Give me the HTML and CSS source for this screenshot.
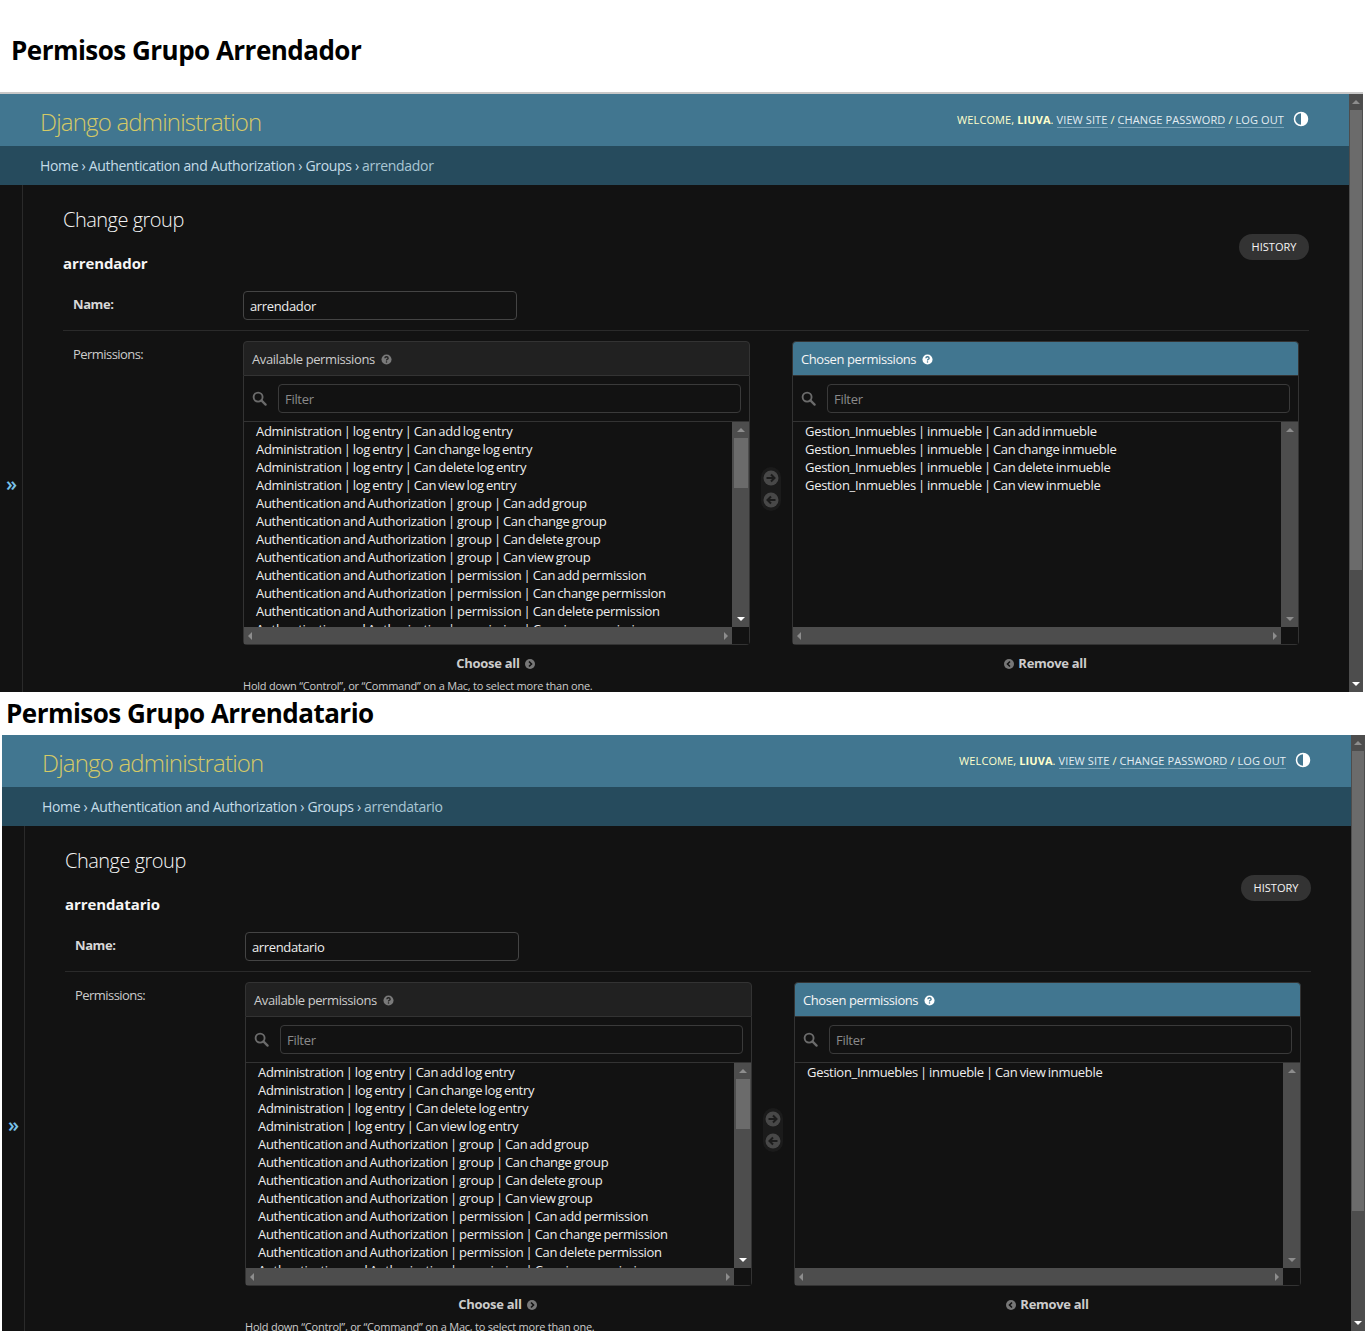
FILE: index.html
```html
<!DOCTYPE html>
<html lang="en">
<head>
<meta charset="utf-8">
<title>Permisos</title>
<link rel="stylesheet" href="styles.css">
</head>
<body>
<svg class="defs" width="0" height="0" aria-hidden="true">
  <symbol id="i-search" viewBox="0 0 16 16"><circle cx="6.5" cy="6.5" r="4.8" fill="none" stroke="currentColor" stroke-width="2"/><path d="M10 10l4.5 4.5" stroke="currentColor" stroke-width="2.4" stroke-linecap="round"/></symbol>
  <symbol id="i-help" viewBox="0 0 12 12"><circle cx="6" cy="6" r="5.5" fill="currentColor"/><path d="M4.2 4.6c0-1 .8-1.6 1.8-1.6s1.8.6 1.8 1.5c0 1.300-1.800 1.300-1.800 2.500" fill="none" stroke="var(--hole)" stroke-width="1.400"/><rect x="5.300" y="8" width="1.400" height="1.400" fill="var(--hole)"/></symbol>
  <symbol id="i-right" viewBox="0 0 16 16"><circle cx="8" cy="8" r="7.500" fill="currentColor"/><path d="M3.500 8h8M8 4.500L11.500 8 8 11.500" fill="none" stroke="#1c1c1c" stroke-width="2"/></symbol>
  <symbol id="i-left" viewBox="0 0 16 16"><circle cx="8" cy="8" r="7.500" fill="currentColor"/><path d="M12.500 8h-8M8 4.500L4.500 8 8 11.500" fill="none" stroke="#1c1c1c" stroke-width="2"/></symbol>
  <symbol id="i-cright" viewBox="0 0 10 10"><circle cx="5" cy="5" r="5" fill="currentColor"/><path d="M4 2.500L6.500 5 4 7.500" fill="none" stroke="#121212" stroke-width="1.600"/></symbol>
  <symbol id="i-cleft" viewBox="0 0 10 10"><circle cx="5" cy="5" r="5" fill="currentColor"/><path d="M6 2.500L3.500 5 6 7.500" fill="none" stroke="#121212" stroke-width="1.600"/></symbol>
  <symbol id="i-contrast" viewBox="0 0 16 16"><circle cx="8" cy="8" r="6.500" fill="none" stroke="currentColor" stroke-width="1.500"/><path d="M8 1.500a6.500 6.500 0 0 1 0 13z" fill="currentColor"/></symbol>
</svg>

<h1 class="title title-first">Permisos Grupo Arrendador</h1>
<section class="shot shot-first">
  <div class="page">
    <header class="top">
      <div class="brand">Django administration</div>
      <div class="tools"><span>WELCOME, <strong>LIUVA</strong>. <a>VIEW SITE</a> / <a>CHANGE PASSWORD</a> / <a>LOG OUT</a></span>
        <svg class="contrast"><use href="#i-contrast"/></svg></div>
    </header>
    <nav class="crumbs">Home › Authentication and Authorization › Groups › <span>arrendador</span></nav>
    <div class="main">
      <div class="toggle">»</div>
      <div class="content">
        <div class="head">
          <div>
            <h2 class="change">Change group</h2>
            <h3 class="obj">arrendador</h3>
          </div>
          <a class="history">HISTORY</a>
        </div>
        <div class="row row-name">
          <label class="lab lab-b">Name:</label>
          <div class="input">arrendador</div>
        </div>
        <div class="row row-perm">
          <label class="lab">Permissions:</label>
          <div class="field">
            <div class="selector">
              <div class="box">
                <div class="cap cap-a">Available permissions <svg class="help"><use href="#i-help"/></svg></div>
                <div class="filter"><svg class="mag"><use href="#i-search"/></svg><div class="finput">Filter</div></div>
                <div class="sel">
                  <div class="list">
                    <div>Administration | log entry | Can add log entry</div>
                    <div>Administration | log entry | Can change log entry</div>
                    <div>Administration | log entry | Can delete log entry</div>
                    <div>Administration | log entry | Can view log entry</div>
                    <div>Authentication and Authorization | group | Can add group</div>
                    <div>Authentication and Authorization | group | Can change group</div>
                    <div>Authentication and Authorization | group | Can delete group</div>
                    <div>Authentication and Authorization | group | Can view group</div>
                    <div>Authentication and Authorization | permission | Can add permission</div>
                    <div>Authentication and Authorization | permission | Can change permission</div>
                    <div>Authentication and Authorization | permission | Can delete permission</div>
                    <div>Authentication and Authorization | permission | Can view permission</div>
                  </div>
                  <div class="vbar"><i class="up"></i><b class="thumb"></b><i class="down lit"></i></div>
                  <div class="hbar"><i class="lf"></i><i class="rt"></i></div>
                  <div class="corner"></div>
                </div>
              </div>
              <div class="movers">
                <div class="pill">
                  <svg><use href="#i-right"/></svg>
                  <svg><use href="#i-left"/></svg>
                </div>
              </div>
              <div class="box">
                <div class="cap cap-c">Chosen permissions <svg class="help"><use href="#i-help"/></svg></div>
                <div class="filter"><svg class="mag"><use href="#i-search"/></svg><div class="finput">Filter</div></div>
                <div class="sel">
                  <div class="list">
                    <div>Gestion_Inmuebles | inmueble | Can add inmueble</div>
                    <div>Gestion_Inmuebles | inmueble | Can change inmueble</div>
                    <div>Gestion_Inmuebles | inmueble | Can delete inmueble</div>
                    <div>Gestion_Inmuebles | inmueble | Can view inmueble</div>
                  </div>
                  <div class="vbar"><i class="up"></i><i class="down"></i></div>
                  <div class="hbar"><i class="lf"></i><i class="rt"></i></div>
                  <div class="corner"></div>
                </div>
              </div>
            </div>
            <div class="alls">
              <div class="all">Choose all <svg class="ci"><use href="#i-cright"/></svg></div>
              <div class="gap"></div>
              <div class="all"><svg class="ci ci-l"><use href="#i-cleft"/></svg> Remove all</div>
            </div>
            <p class="hint">Hold down “Control”, or “Command” on a Mac, to select more than one.</p>
          </div>
        </div>
      </div>
    </div>
  </div>
  <div class="sb"><i class="up"></i><b class="sb-thumb"></b><i class="down lit"></i></div>
</section>

<h1 class="title title-second">Permisos Grupo Arrendatario</h1>
<section class="shot shot-second">
  <div class="page">
    <header class="top">
      <div class="brand">Django administration</div>
      <div class="tools"><span>WELCOME, <strong>LIUVA</strong>. <a>VIEW SITE</a> / <a>CHANGE PASSWORD</a> / <a>LOG OUT</a></span>
        <svg class="contrast"><use href="#i-contrast"/></svg></div>
    </header>
    <nav class="crumbs">Home › Authentication and Authorization › Groups › <span>arrendatario</span></nav>
    <div class="main">
      <div class="toggle">»</div>
      <div class="content">
        <div class="head">
          <div>
            <h2 class="change">Change group</h2>
            <h3 class="obj">arrendatario</h3>
          </div>
          <a class="history">HISTORY</a>
        </div>
        <div class="row row-name">
          <label class="lab lab-b">Name:</label>
          <div class="input">arrendatario</div>
        </div>
        <div class="row row-perm">
          <label class="lab">Permissions:</label>
          <div class="field">
            <div class="selector">
              <div class="box">
                <div class="cap cap-a">Available permissions <svg class="help"><use href="#i-help"/></svg></div>
                <div class="filter"><svg class="mag"><use href="#i-search"/></svg><div class="finput">Filter</div></div>
                <div class="sel">
                  <div class="list">
                    <div>Administration | log entry | Can add log entry</div>
                    <div>Administration | log entry | Can change log entry</div>
                    <div>Administration | log entry | Can delete log entry</div>
                    <div>Administration | log entry | Can view log entry</div>
                    <div>Authentication and Authorization | group | Can add group</div>
                    <div>Authentication and Authorization | group | Can change group</div>
                    <div>Authentication and Authorization | group | Can delete group</div>
                    <div>Authentication and Authorization | group | Can view group</div>
                    <div>Authentication and Authorization | permission | Can add permission</div>
                    <div>Authentication and Authorization | permission | Can change permission</div>
                    <div>Authentication and Authorization | permission | Can delete permission</div>
                    <div>Authentication and Authorization | permission | Can view permission</div>
                  </div>
                  <div class="vbar"><i class="up"></i><b class="thumb"></b><i class="down lit"></i></div>
                  <div class="hbar"><i class="lf"></i><i class="rt"></i></div>
                  <div class="corner"></div>
                </div>
              </div>
              <div class="movers">
                <div class="pill">
                  <svg><use href="#i-right"/></svg>
                  <svg><use href="#i-left"/></svg>
                </div>
              </div>
              <div class="box">
                <div class="cap cap-c">Chosen permissions <svg class="help"><use href="#i-help"/></svg></div>
                <div class="filter"><svg class="mag"><use href="#i-search"/></svg><div class="finput">Filter</div></div>
                <div class="sel">
                  <div class="list">
                    <div>Gestion_Inmuebles | inmueble | Can view inmueble</div>
                  </div>
                  <div class="vbar"><i class="up"></i><i class="down"></i></div>
                  <div class="hbar"><i class="lf"></i><i class="rt"></i></div>
                  <div class="corner"></div>
                </div>
              </div>
            </div>
            <div class="alls">
              <div class="all">Choose all <svg class="ci"><use href="#i-cright"/></svg></div>
              <div class="gap"></div>
              <div class="all"><svg class="ci ci-l"><use href="#i-cleft"/></svg> Remove all</div>
            </div>
            <p class="hint">Hold down “Control”, or “Command” on a Mac, to select more than one.</p>
          </div>
        </div>
      </div>
    </div>
  </div>
  <div class="sb"><i class="up"></i><b class="sb-thumb"></b><i class="down lit"></i></div>
</section>
</body>
</html>
```
FILE: styles.css
```css
* { box-sizing: border-box; }
html, body { margin: 0; padding: 0; background: #fff; }
body { font-family: "Open Sans", "Noto Sans", sans-serif; overflow: hidden; height: 1331px; }
.defs { position: absolute; }
.title { margin: 0; color: #000; font-size: 26px; font-weight: 700; letter-spacing: -0.52px; line-height: 36px; }
.title-first { height: 92px; padding: 32px 0 0 11px; }
.title-second { height: 43px; padding: 3px 0 0 6px; }
.shot { display: flex; overflow: hidden; background: #121212; }
.shot-first { height: 600px; width: 1363px; border-top: 2px solid #c8c8c8; }
.shot-second { height: 596px; width: 1363px; margin-left: 2px; }
.page { flex: 1; min-width: 0; }
.top { height: 52px; background: #417690; display: flex; justify-content: space-between; align-items: center; padding: 0 40px; }
.brand { color: #f5dd5d; opacity: .82; font-size: 24px; font-weight: 300; letter-spacing: -0.8px; margin-top: 2px; }
.tools { color: #ffc; font-size: 11px; letter-spacing: .1px; display: flex; align-items: center; margin-top: -2px; }
.tools strong { font-weight: 700; }
.tools a { color: #e4edf2; border-bottom: 1px solid #7ea6ba; }
.contrast { width: 16px; height: 16px; color: #fff; margin-left: 9px; }
.crumbs { height: 39px; background: #264b5d; color: #c4dce8; font-size: 14px; letter-spacing: -0.33px; line-height: 40px; padding-left: 40px; }
.crumbs span { color: #a9c6d4; }
.main { display: flex; height: 560px; }
.toggle { width: 23px; border-right: 1px solid #2a2a2a; color: #79c1e8; font-size: 20px; font-weight: 600; line-height: 24px; padding: 287px 0 0 6px; }
.content { flex: 1; padding: 0 40px; min-width: 0; }
.head { display: flex; justify-content: space-between; align-items: flex-start; height: 106px; }
.change { margin: 20px 0 0; color: #f5f5f5; font-size: 20px; font-weight: 300; line-height: 30px; letter-spacing: -0.5px; }
.obj { margin: 18px 0 0; color: #f5f5f5; font-size: 15px; font-weight: 700; line-height: 20px; letter-spacing: -0.1px; }
.history { margin-top: 49px; height: 26px; width: 70px; border-radius: 13px; background: #333; color: #f5f5f5; font-size: 11px; line-height: 26px; text-align: center; }
.row { display: flex; padding-left: 10px; }
.row-name { height: 40px; border-bottom: 1px solid #2a2a2a; }
.row-perm { padding-top: 10px; }
.lab { width: 170px; color: #ccc; font-size: 13px; letter-spacing: -0.55px; line-height: 26px; flex: none; }
.lab-b { font-weight: 700; color: #d8d8d8; letter-spacing: -0.4px; }
.input { width: 274px; height: 29px; border: 1px solid #444; border-radius: 4px; background: #121212; color: #eee; font-size: 13px; letter-spacing: -0.35px; line-height: 28px; padding-left: 6px; }
.field { width: 1056px; }
.selector { display: flex; }
.box { width: 507px; flex: none; }
.cap { height: 35px; border: 1px solid #333; border-radius: 4px 4px 0 0; font-size: 13px; letter-spacing: -0.4px; line-height: 35px; padding-left: 8px; }
.cap-a { background: #212121; color: #ccc; --hole: #212121; }
.cap-c { background: #417690; color: #f5f5f5; --hole: #417690; }
.help { width: 11px; height: 11px; vertical-align: -1px; margin-left: 3px; color: #7a7a7a; }
.cap-c .help { color: #fff; }
.filter { height: 46px; display: flex; align-items: center; border-left: 1px solid #333; border-right: 1px solid #333; border-bottom: 1px solid #333; padding: 0 8px; }
.mag { width: 15px; height: 15px; color: #6b6b6b; flex: none; margin-right: 11px; }
.finput { flex: 1; height: 29px; border: 1px solid #3a3a3a; border-radius: 4px; color: #8a8a8a; font-size: 13px; line-height: 28px; padding-left: 6px; letter-spacing: -0.3px; }
.sel { display: grid; grid-template-columns: 1fr 17px; grid-template-rows: 205px 17px; border: 1px solid #333; border-top: 0; border-radius: 0 0 4px 4px; height: 223px; }
.list { overflow: hidden; padding: 0 0 0 12px; color: #eee; font-size: 13px; letter-spacing: -0.3px; word-spacing: -0.9px; line-height: 18px; white-space: nowrap; }
.vbar { background: #4d4d4d; display: flex; flex-direction: column; align-items: center; }
.sb { width: 14px; flex: none; background: #4d4d4d; display: flex; flex-direction: column; align-items: center; }
.hbar { background: #4d4d4d; display: flex; justify-content: space-between; align-items: center; padding: 0 4px; }
.corner { background: #121212; }
.up, .down { width: 0; height: 0; border-left: 4px solid transparent; border-right: 4px solid transparent; flex: none; }
.up { border-bottom: 4px solid #8d8d8d; margin: 6px 0; }
.down { border-top: 4px solid #8d8d8d; margin: auto 0 6px; }
.down.lit { border-top-color: #fff; }
.lf, .rt { width: 0; height: 0; border-top: 4px solid transparent; border-bottom: 4px solid transparent; }
.lf { border-right: 4px solid #8d8d8d; }
.rt { border-left: 4px solid #8d8d8d; }
.thumb { width: 14px; height: 50px; background: #6b6b6b; }
.sb-thumb { width: 12px; height: 460px; background: #6b6b6b; }
.movers { width: 42px; flex: none; padding-top: 126px; display: flex; flex-direction: column; align-items: center; }
.pill { width: 20px; height: 44px; border-radius: 10px; background: #1b1b1b; display: flex; flex-direction: column; align-items: center; justify-content: space-between; padding: 3px 0; }
.pill svg { width: 16px; height: 16px; color: #484848; }
.alls { display: flex; height: 36px; align-items: center; }
.all { width: 507px; text-align: center; color: #ccc; font-size: 13px; font-weight: 700; letter-spacing: -0.3px; }
.gap { width: 42px; }
.ci { width: 10px; height: 10px; color: #777; vertical-align: -1px; margin: 0 2px; }
.ci-l { margin: 0 1px 0 0; }
.hint { margin: -3px 0 0; color: #ccc; font-size: 11px; letter-spacing: -0.23px; line-height: 16px; }
```
